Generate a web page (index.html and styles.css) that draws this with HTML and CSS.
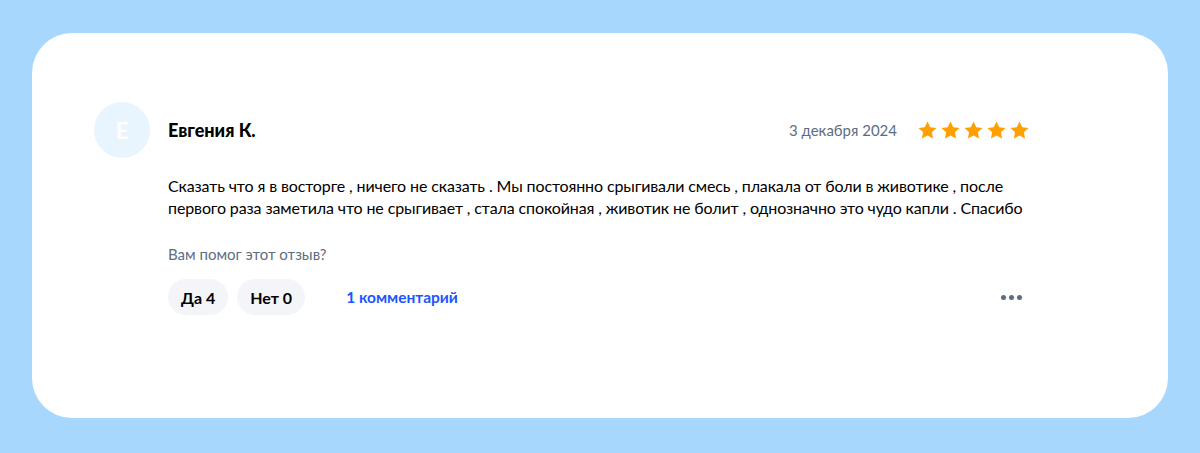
FILE: index.html
```html
<!DOCTYPE html>
<html lang="ru">
<head>
<meta charset="utf-8">
<link rel="stylesheet" href="styles.css">
</head>
<body>
<div class="card">
  <div class="review">
    <div class="head">
      <div class="avatar">E</div>
      <div class="name">Евгения К.</div>
      <div class="date">3 декабря 2024</div>
      <div class="stars">
        <svg viewBox="0 0 24 24"><path d="M12 2.6l2.9 6 6.5.8-4.8 4.5 1.2 6.5L12 17.2l-5.8 3.2 1.2-6.5-4.8-4.5 6.5-.8z"/></svg>
        <svg viewBox="0 0 24 24"><path d="M12 2.6l2.9 6 6.5.8-4.8 4.5 1.2 6.5L12 17.2l-5.8 3.2 1.2-6.5-4.8-4.5 6.5-.8z"/></svg>
        <svg viewBox="0 0 24 24"><path d="M12 2.6l2.9 6 6.5.8-4.8 4.5 1.2 6.5L12 17.2l-5.8 3.2 1.2-6.5-4.8-4.5 6.5-.8z"/></svg>
        <svg viewBox="0 0 24 24"><path d="M12 2.6l2.9 6 6.5.8-4.8 4.5 1.2 6.5L12 17.2l-5.8 3.2 1.2-6.5-4.8-4.5 6.5-.8z"/></svg>
        <svg viewBox="0 0 24 24"><path d="M12 2.6l2.9 6 6.5.8-4.8 4.5 1.2 6.5L12 17.2l-5.8 3.2 1.2-6.5-4.8-4.5 6.5-.8z"/></svg>
      </div>
    </div>
    <div class="body">
      <p class="text">Сказать что я в восторге , ничего не сказать . Мы постоянно срыгивали смесь , плакала от боли в животике , после первого раза заметила что не срыгивает , стала спокойная , животик не болит , однозначно это чудо капли . Спасибо</p>
      <div class="helpful">Вам помог этот отзыв?</div>
      <div class="actions">
        <button class="pill">Да 4</button>
        <button class="pill">Нет 0</button>
        <a class="comments">1 комментарий</a>
        <div class="more"><span></span><span></span><span></span></div>
      </div>
    </div>
  </div>
</div>
</body>
</html>
```

FILE: styles.css
```css
* { box-sizing: border-box; }
html, body { margin: 0; }
body {
  background: #a8d7fd;
  padding: 33px 32px 35px;
  font-family: "Lato", "Noto Sans", sans-serif;
  color: #000;
}
.card {
  background: #fff;
  border-radius: 40px;
  height: 385px;
  padding: 69px 137px 0 62px;
}
.head {
  display: flex;
  align-items: center;
  height: 56px;
}
.avatar {
  width: 56px;
  height: 56px;
  border-radius: 50%;
  background: #e9f5fe;
  color: #fff;
  font-weight: 700;
  font-size: 22px;
  display: flex;
  align-items: center;
  justify-content: center;
  flex: none;
}
.name {
  margin-left: 18px;
  font-weight: 900;
  font-size: 18px;
  flex: 1;
}
.date {
  color: #5c6d82;
  font-size: 15px;
  margin-right: 19px;
}
.stars {
  display: flex;
  gap: 0;
}
.stars svg {
  width: 23px;
  height: 23px;
  fill: #ffa000;
}
.body {
  padding-left: 74px;
}
.text {
  margin: 17px 0 0;
  font-size: 16px;
  line-height: 22px;
  letter-spacing: -0.12px;
}
.helpful {
  margin-top: 25px;
  color: #5c6d82;
  font-size: 15px;
  line-height: 20px;
}
.actions {
  margin-top: 15px;
  display: flex;
  align-items: center;
}
.pill {
  height: 36px;
  border: 0;
  border-radius: 18px;
  background: #f3f5f8;
  font-family: inherit;
  font-weight: 700;
  font-size: 16px;
  color: #000;
  padding: 0 13px;
  margin-right: 9px;
}
.comments {
  margin-left: 32px;
  color: #1a55ff;
  font-weight: 700;
  font-size: 15.5px;
  flex: 1;
}
.more {
  display: flex;
  gap: 3px;
  margin-right: 9px;
}
.more span {
  width: 5px;
  height: 5px;
  border-radius: 50%;
  background: #5c6d82;
}
```
